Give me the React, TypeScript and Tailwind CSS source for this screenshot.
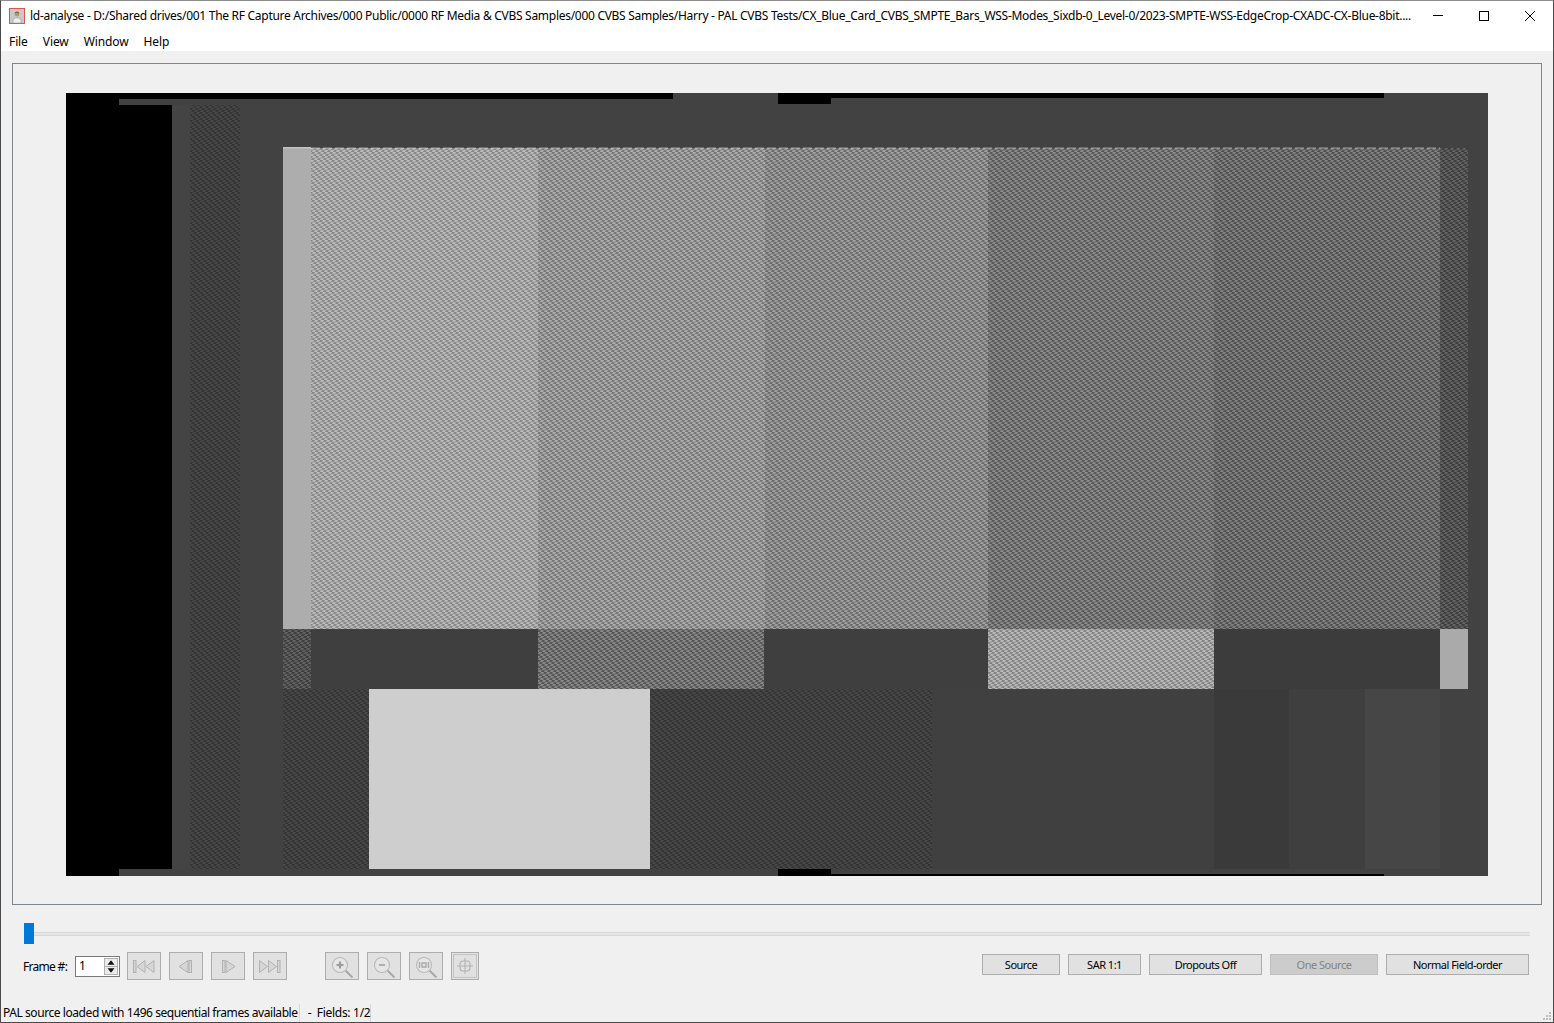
const UI_FONT = "font-['Noto_Sans','Liberation_Sans',sans-serif]";

const TITLE =
  "ld-analyse - D:/Shared drives/001 The RF Capture Archives/000 Public/0000 RF Media & CVBS Samples/000 CVBS Samples/Harry - PAL CVBS Tests/CX_Blue_Card_CVBS_SMPTE_Bars_WSS-Modes_Sixdb-0_Level-0/2023-SMPTE-WSS-EdgeCrop-CXADC-CX-Blue-8bit....";

// picture coordinates are relative to the top left of the video frame
const OX = 66;
const OY = 93;

const hatches = [
  { id: "h1", a: "#bebebe", b: "#858585" },
  { id: "h2", a: "#b0b0b0", b: "#737373" },
  { id: "h3", a: "#a4a4a4", b: "#686868" },
  { id: "h4", a: "#8e8e8e", b: "#565656" },
  { id: "h5", a: "#848484", b: "#4d4d4d" },
  { id: "h6", a: "#646464", b: "#3c3c3c" },
  { id: "h7", a: "#8c8c8c", b: "#525252" },
  { id: "h8", a: "#bdbdbd", b: "#808080" },
  { id: "h9", a: "#494949", b: "#333333" },
];

const blocks: [number, number, number, number, string][] = [
  // black edges
  [66, 93, 53, 783, "#000"],
  [119, 105, 53, 764, "#000"],
  [119, 93, 554, 6, "#000"],
  [778, 93, 53, 11, "#000"],
  [831, 93, 553, 5, "#000"],
  [778, 869, 53, 7, "#000"],
  [831, 874, 553, 2, "#000"],
  // burst columns
  [190, 105, 50, 764, "url(#h9)"],
  // main bars
  [283, 148, 28, 481, "#adadad"],
  [311, 148, 227, 481, "url(#h1)"],
  [538, 148, 227, 481, "url(#h2)"],
  [765, 148, 223, 481, "url(#h3)"],
  [988, 148, 226, 481, "url(#h4)"],
  [1214, 148, 226, 481, "url(#h5)"],
  [1440, 148, 28, 481, "url(#h6)"],
  // castellations
  [283, 629, 28, 60, "url(#h6)"],
  [311, 629, 227, 60, "#3f3f3f"],
  [538, 629, 226, 60, "url(#h7)"],
  [764, 629, 224, 60, "#3f3f3f"],
  [988, 629, 226, 60, "url(#h8)"],
  [1214, 629, 226, 60, "#3c3c3c"],
  [1440, 629, 28, 60, "#aaaaaa"],
  // lower row
  [283, 689, 86, 180, "url(#h9)"],
  [369, 689, 281, 180, "#cecece"],
  [650, 689, 282, 180, "url(#h9)"],
  [932, 689, 282, 180, "#404040"],
  [1214, 689, 75, 180, "#3a3a3a"],
  [1289, 689, 76, 180, "#3f3f3f"],
  [1365, 689, 75, 180, "#464646"],
];

function VideoFrame() {
  return (
    <svg width="1422" height="783" viewBox="66 93 1422 783" className="block">
      <defs>
        {hatches.map((h) => (
          <pattern
            key={h.id}
            id={h.id}
            width="6"
            height="4"
            patternUnits="userSpaceOnUse"
            patternTransform="translate(1 0) skewX(-26.565)"
          >
            <rect width="6" height="4" fill={h.b} />
            <rect width="3" height="2" fill={h.a} />
            <rect x="3" y="2" width="3" height="2" fill={h.a} />
          </pattern>
        ))}
      </defs>
      <rect x={OX} y={OY} width="1422" height="783" fill="#424242" />
      <rect x="172" y="105" width="18" height="764" fill="#444444" />
      {blocks.map(([x, y, w, h, fill], i) => (
        <rect key={i} x={x} y={y} width={w} height={h} fill={fill} />
      ))}
      <rect x="283" y="147" width="28" height="1.5" fill="#c4c4c4" />
      <path d="M311 148H1440" stroke="#bdbdbd" strokeWidth="1.5" strokeDasharray="9 3" opacity="0.5" />
    </svg>
  );
}

function AppIcon() {
  return (
    <svg width="16" height="16" viewBox="0 0 16 16" className="shrink-0">
      <rect x="0.5" y="0.5" width="15" height="15" fill="#c9c9c9" stroke="#d9534f" />
      <path d="M4 15v-3.5l2.5-1.5h3l2.5 1.5V15z" fill="#f2efea" stroke="#9a8d80" strokeWidth="0.5" />
      <circle cx="8" cy="6" r="2.4" fill="#b98f6d" />
      <path d="M5.6 5.5C6 3 10 3 10.4 5.5L8 4.6z" fill="#6b5544" />
    </svg>
  );
}

function WindowControls() {
  return (
    <div className="flex h-full shrink-0 items-center">
      <div className="flex w-[46px] justify-center">
        <div className="h-px w-[10px] bg-black" />
      </div>
      <div className="flex w-[46px] justify-center">
        <div className="h-[10px] w-[10px] border border-black" />
      </div>
      <div className="flex w-[46px] justify-center">
        <svg width="10" height="10" viewBox="0 0 10 10">
          <path d="M0 0L10 10M10 0L0 10" stroke="#000" strokeWidth="1" fill="none" />
        </svg>
      </div>
    </div>
  );
}

const ICON_FILL = "#d6d6d6";
const ICON_LINE = "#b2b2b2";

function TransportIcon({ kind }: { kind: "first" | "prev" | "next" | "last" }) {
  const body = {
    first: (
      <>
        <rect x="4.5" y="5.5" width="2.5" height="12" />
        <path d="M16 5.5v12L8 11.5zM25 5.5v12L17 11.5z" />
      </>
    ),
    prev: (
      <>
        <path d="M17 5.5v12L8 11.5z" />
        <rect x="18" y="5.5" width="2.5" height="12" />
      </>
    ),
    next: (
      <>
        <rect x="9.5" y="5.5" width="2.5" height="12" />
        <path d="M13 5.5v12l9-6z" />
      </>
    ),
    last: (
      <>
        <path d="M4.5 5.5v12l8-6zM13.5 5.5v12l8-6z" />
        <rect x="22.5" y="5.5" width="2.5" height="12" />
      </>
    ),
  }[kind];
  return (
    <svg width="30" height="22" viewBox="0 0 30 22" fill={ICON_FILL} stroke={ICON_LINE} strokeWidth="1">
      {body}
    </svg>
  );
}

function ZoomIcon({ kind }: { kind: "in" | "out" | "fit" }) {
  return (
    <svg width="28" height="26" viewBox="0 0 28 26" fill="none">
      <path d="M17.5 17.5l7 7" stroke="#a8a8a8" strokeWidth="2" />
      <circle cx="12" cy="12" r="7.5" fill="#e6e6e6" stroke="#bababa" strokeWidth="1.1" />
      {kind === "in" && <path d="M8.5 12h7M12 8.5v7" stroke="#9c9c9c" strokeWidth="2.2" />}
      {kind === "out" && <path d="M9 12h6" stroke="#a8a8a8" strokeWidth="1.8" />}
      {kind === "fit" && (
        <path d="M7.5 9v6M16.5 9v6M10 10h4v4h-4z" stroke="#a8a8a8" strokeWidth="1.4" />
      )}
    </svg>
  );
}

function ToolButton({ children }: { children: React.ReactNode }) {
  return (
    <div className="flex h-[28px] w-[34px] items-center justify-center border border-[#adadad] bg-[#e1e1e1]">
      {children}
    </div>
  );
}

function TextButton({ label, width, disabled }: { label: string; width: string; disabled?: boolean }) {
  return (
    <div
      className={
        "flex h-[21px] items-center justify-center border pt-px text-[11px] tracking-[-0.5px] " +
        width +
        (disabled
          ? " border-[#bfbfbf] bg-[#cccccc] text-[#838383]"
          : " border-[#adadad] bg-[#e1e1e1] text-black")
      }
    >
      {label}
    </div>
  );
}

export default function App() {
  return (
    <div
      className={
        "flex h-[1023px] w-[1554px] flex-col overflow-hidden border border-[#4a4a4a] border-t-[#8c8c8c] bg-[#f0f0f0] text-[12px] text-black " +
        UI_FONT
      }
    >
      {/* Title bar */}
      <div className="flex h-[29px] shrink-0 items-center bg-white pl-[8px]">
        <AppIcon />
        <div className="ml-[5px] min-w-0 flex-1 overflow-hidden whitespace-nowrap tracking-[-0.285px]">{TITLE}</div>
        <WindowControls />
      </div>

      {/* Menu bar */}
      <div className="flex h-[21px] shrink-0 items-center gap-[15px] bg-white pl-[8px] pt-[2px] tracking-[-0.1px]">
        <span>File</span>
        <span>View</span>
        <span>Window</span>
        <span>Help</span>
      </div>

      {/* Video frame */}
      <div className="mx-[11px] mt-[12px] flex h-[842px] shrink-0 items-center justify-center border border-[#7f858c]">
        <VideoFrame />
      </div>

      {/* Frame slider */}
      <div className="relative mx-[23px] mt-[18px] flex h-[21px] shrink-0 items-center">
        <div className="h-[4px] w-full border-y border-[#d6dad6] bg-[#e6e6e6]" />
        <div className="absolute left-0 top-0 h-[21px] w-[10px] bg-[#0078d7]" />
      </div>

      {/* Controls */}
      <div className="ml-[22px] mr-[24px] mt-[8px] flex h-[28px] shrink-0 items-center">
        <span className="w-[52px] pt-px tracking-[-0.7px]">Frame #:</span>
        <div className="flex h-[21px] w-[45px] items-center border border-[#7a7a7a] bg-white pl-[3px]">
          <span className="flex-1">1</span>
          <div className="mr-px flex h-[17px] w-[14px] flex-col border border-[#b0b0b0] bg-[#ececec]">
            <svg className="flex-1" viewBox="0 0 12 8">
              <path d="M2 6.5l4-5 4 5z" fill="#111" />
            </svg>
            <div className="h-px bg-[#b0b0b0]" />
            <svg className="flex-1" viewBox="0 0 12 8">
              <path d="M2 1.5l4 5 4-5z" fill="#111" />
            </svg>
          </div>
        </div>
        <div className="ml-[7px] flex gap-[8px]">
          <ToolButton><TransportIcon kind="first" /></ToolButton>
          <ToolButton><TransportIcon kind="prev" /></ToolButton>
          <ToolButton><TransportIcon kind="next" /></ToolButton>
          <ToolButton><TransportIcon kind="last" /></ToolButton>
        </div>
        <div className="ml-[38px] flex gap-[8px]">
          <ToolButton><ZoomIcon kind="in" /></ToolButton>
          <ToolButton><ZoomIcon kind="out" /></ToolButton>
          <ToolButton><ZoomIcon kind="fit" /></ToolButton>
          <div className="flex h-[28px] w-[28px] items-center justify-center border border-[#adadad] bg-[#e1e1e1] p-px">
            <div className="flex h-full w-full items-center justify-center border border-[#c4c4c4]">
              <svg width="18" height="18" viewBox="0 0 18 18" fill="none" stroke="#b4b4b4" strokeWidth="1.1">
                <rect x="4" y="4" width="10" height="10" rx="3" />
                <path d="M1 9h16M9 1v16" />
              </svg>
            </div>
          </div>
        </div>
        <div className="mb-[3px] ml-auto flex gap-[8px]">
          <TextButton label="Source" width="w-[78px]" />
          <TextButton label="SAR 1:1" width="w-[73px]" />
          <TextButton label="Dropouts Off" width="w-[113px]" />
          <TextButton label="One Source" width="w-[108px]" disabled />
          <TextButton label="Normal Field-order" width="w-[143px]" />
        </div>
      </div>

      {/* Status bar */}
      <div className="mt-auto flex h-[19px] shrink-0 items-center pl-[2px]">
        <span className="border-r border-[#d8d8d8] pr-[1px] tracking-[-0.43px]">
          PAL source loaded with 1496 sequential frames available
        </span>
        <span className="border-r border-[#d8d8d8] pl-[8px] tracking-[-0.3px]">-&nbsp;&nbsp;Fields: 1/2</span>
        <svg className="ml-auto mr-px mt-[6px]" width="10" height="10" viewBox="0 0 10 10" fill="#bdbdbd">
          <rect x="7" y="1" width="2" height="2" />
          <rect x="4" y="4" width="2" height="2" />
          <rect x="7" y="4" width="2" height="2" />
          <rect x="1" y="7" width="2" height="2" />
          <rect x="4" y="7" width="2" height="2" />
          <rect x="7" y="7" width="2" height="2" />
        </svg>
      </div>
    </div>
  );
}
